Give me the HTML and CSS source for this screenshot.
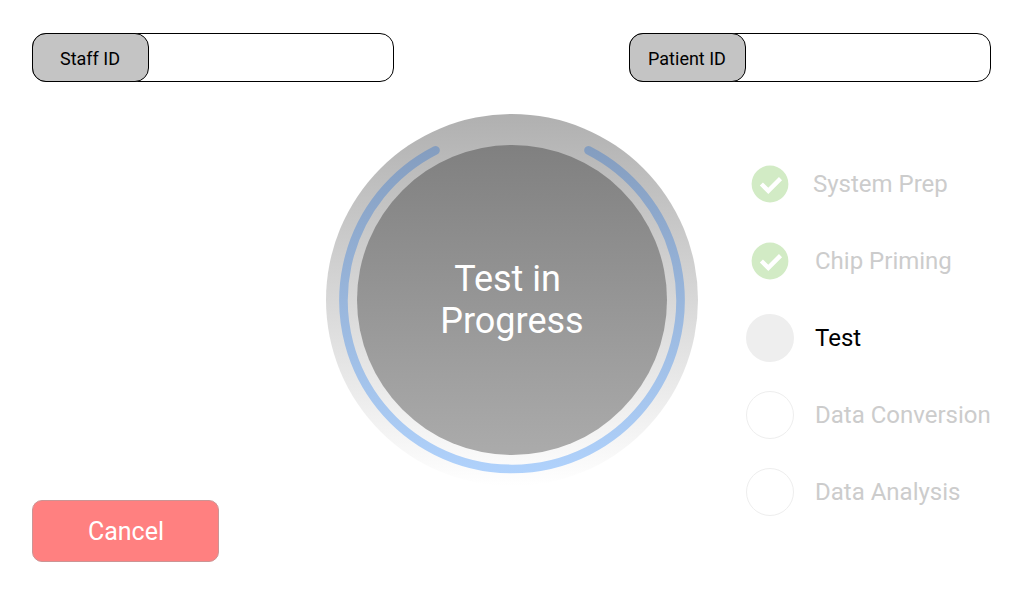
FILE: index.html
```
<!DOCTYPE html>
<html lang="en">
<head>
<meta charset="utf-8">
<title>Test in Progress</title>
<link rel="stylesheet" href="styles.css">
</head>
<body>
<div class="screen">
  <header class="header">
    <label class="field"><span class="field-label">Staff ID</span></label>
    <label class="field"><span class="field-label">Patient ID</span></label>
  </header>
  <main class="main">
    <div class="actions"><button class="cancel" type="button">Cancel</button></div>
    <section class="dial">
      <svg class="arc" viewBox="0 0 372 372">
        <defs>
          <linearGradient id="arc-fill" gradientUnits="userSpaceOnUse" x1="0" y1="32" x2="0" y2="360">
            <stop offset="0" stop-color="#849dbf"/>
            <stop offset="1" stop-color="#b0d2fc"/>
          </linearGradient>
        </defs>
        <path d="M109.5 36.3A168.5 168.5 0 1 0 262.5 36.3" fill="none" stroke="url(#arc-fill)" stroke-width="8.6" stroke-linecap="round"/>
      </svg>
      <div class="dial-face"><p class="dial-text">Test in <br>Progress</p></div>
    </section>
    <ol class="steps">
      <li class="step done"><span class="marker"><svg class="check" viewBox="0 0 38 38"><circle cx="19" cy="19" r="18.4" fill="#d2ebc5"/><path d="M10.4 19L17.3 25.8L29.5 13.6" fill="none" stroke="#fff" stroke-width="4.4"/></svg></span><span class="step-name first">System Prep</span></li>
      <li class="step done"><span class="marker"><svg class="check" viewBox="0 0 38 38"><circle cx="19" cy="19" r="18.4" fill="#d2ebc5"/><path d="M10.4 19L17.3 25.8L29.5 13.6" fill="none" stroke="#fff" stroke-width="4.4"/></svg></span><span class="step-name">Chip Priming</span></li>
      <li class="step current"><span class="marker"></span><span class="step-name">Test</span></li>
      <li class="step pending"><span class="marker"></span><span class="step-name">Data Conversion</span></li>
      <li class="step pending"><span class="marker"></span><span class="step-name">Data Analysis</span></li>
    </ol>
  </main>
</div>
</body>
</html>
```
FILE: styles.css
```
* { box-sizing: border-box; }
body {
  margin: 0;
  background: #fff;
  font-family: Roboto, "Liberation Sans", sans-serif;
  color: #000;
}
.screen {
  width: 1024px;
  height: 600px;
  padding: 33px 33px 38px 32px;
  display: flex;
  flex-direction: column;
  gap: 32px;
}
.header { display: flex; justify-content: space-between; }
.field {
  width: 362px;
  height: 49px;
  border: 1px solid #000;
  border-radius: 14px;
  display: flex;
}
.field-label {
  width: 117px;
  height: 49px;
  margin: -1px;
  padding: 2px 1px 0 0;
  border: 1px solid #000;
  border-radius: 14px;
  background: #c4c4c4;
  font-size: 18px;
  display: flex;
  align-items: center;
  justify-content: center;
}
.main {
  flex: 1;
  display: grid;
  grid-template-columns: 294px 372px 1fr;
}
.actions { display: flex; align-items: flex-end; }
.cancel {
  width: 187px;
  height: 62px;
  padding: 1px 0 0 1px;
  border: 1px solid #cc9494;
  border-radius: 10px;
  background: #ff8080;
  color: #fff;
  font: 25px Roboto, "Liberation Sans", sans-serif;
}
.dial {
  width: 372px;
  height: 372px;
  border-radius: 50%;
  background: linear-gradient(#b0b0b0, #fff);
  display: grid;
  place-items: center;
}
.arc { grid-area: 1 / 1; width: 372px; height: 372px; }
.dial-face {
  grid-area: 1 / 1;
  width: 310px;
  height: 310px;
  border-radius: 50%;
  background: linear-gradient(#808080, #ababab);
  display: flex;
  align-items: center;
  justify-content: center;
}
.dial-text {
  margin: 0;
  color: #fff;
  font-size: 36px;
  line-height: 42px;
  text-align: center;
  white-space: pre;
}
.steps {
  list-style: none;
  margin: 0;
  padding: 46px 0 0 48px;
  display: flex;
  flex-direction: column;
  gap: 29px;
}
.step { display: flex; align-items: center; height: 48px; gap: 21px; }
.marker {
  width: 48px;
  height: 48px;
  border-radius: 50%;
  display: flex;
  align-items: center;
  justify-content: center;
}
.check { width: 38px; height: 38px; }
.current .marker { background: #eee; }
.pending .marker { border: 1px solid #eee; }
.step-name { font-size: 24px; color: #ccc; white-space: nowrap; }
.step-name.first { margin-left: -2px; }
.current .step-name { color: #000; }
```
